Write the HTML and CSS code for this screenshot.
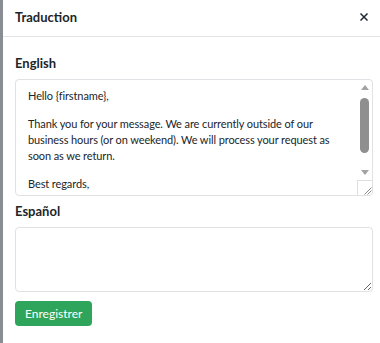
FILE: index.html
```html
<!DOCTYPE html>
<html>
<head>
<meta charset="utf-8">
<link rel="stylesheet" href="styles.css">
</head>
<body>
<div class="modal">
  <div class="modal-header">
    <h5 class="modal-title">Traduction</h5>
    <button class="close" type="button" aria-label="Fermer">
      <svg width="8" height="8" viewBox="0 0 8 8"><path d="M1 1L7 7M7 1L1 7" stroke="#1e2a36" stroke-width="1.5" stroke-linecap="square"/></svg>
    </button>
  </div>
  <div class="modal-body">
    <label class="field-label">English</label>
    <div class="field field-en">
      <div class="editor" contenteditable="true">
        <p>Hello {firstname},</p>
        <p>Thank you for your message. We are currently outside of our business hours (or on weekend). We will process your request as soon as we return.</p>
        <p>Best regards,</p>
      </div>
      <div class="scrollbar">
        <span class="sb-btn"><span class="tri tri-up"></span></span>
        <span class="sb-track"><span class="sb-thumb"></span></span>
        <span class="sb-btn"><span class="tri tri-down"></span></span>
        <span class="sb-corner">
          <svg width="14" height="14" viewBox="0 0 14 14"><path d="M13.5 6.5L6.5 13.5M13.5 9.5L9.5 13.5" stroke="#8a8a8a" stroke-width="1"/></svg>
        </span>
      </div>
    </div>
    <label class="field-label">Español</label>
    <textarea class="field field-es"></textarea>
    <button class="btn-save" type="button">Enregistrer</button>
  </div>
</div>
</body>
</html>
```
FILE: styles.css
```css
html, body {
  margin: 0;
  padding: 0;
  background: #ffffff;
}
body {
  font-family: Lato, "Noto Sans", sans-serif;
  color: #212529;
  width: 380px;
  height: 343px;
  overflow: hidden;
}
.modal {
  border-left: 3px solid #8a8c93;
  height: 343px;
  box-sizing: border-box;
}
.modal-header {
  display: flex;
  align-items: center;
  justify-content: space-between;
  height: 37px;
  box-sizing: border-box;
  padding: 0 12px 2px 12px;
  border-bottom: 1px solid #e3e4e6;
}
.modal-title {
  margin: 0;
  font-size: 13px;
  font-weight: 700;
  color: #212529;
}
.close {
  border: 0;
  background: none;
  padding: 0;
  margin: 0;
  width: 8px;
  height: 8px;
  display: flex;
}
.modal-body {
  display: flex;
  flex-direction: column;
  align-items: flex-start;
  padding: 18px 4px 0 12px;
}
.field-label {
  font-size: 13px;
  font-weight: 700;
  line-height: 16px;
  color: #212529;
  margin-bottom: 8px;
}
.field {
  display: block;
  width: 358px;
  box-sizing: border-box;
  border: 1px solid #dfe1e4;
  border-radius: 4px;
  font-family: inherit;
  font-size: 11px;
  letter-spacing: -0.1px;
  line-height: 16px;
  color: #212529;
  padding: 8px 12px;
  margin: 0 0 7px 0;
  resize: vertical;
  outline: none;
}
.field-en {
  display: flex;
  height: 117px;
  padding: 0;
  overflow: hidden;
  resize: none;
}
.editor {
  flex: 1;
  min-width: 0;
  padding: 8px 12px;
  outline: none;
  overflow: hidden;
}
.editor p {
  margin: 0 0 12px 0;
}
.editor p:last-child {
  margin-bottom: 0;
}
.scrollbar {
  width: 15px;
  flex: none;
  display: flex;
  flex-direction: column;
}
.sb-btn {
  height: 15px;
  flex: none;
  display: flex;
  align-items: center;
  justify-content: center;
}
.tri {
  width: 0;
  height: 0;
  border-left: 4px solid transparent;
  border-right: 4px solid transparent;
}
.tri-up {
  border-bottom: 5px solid #a3a3a3;
}
.tri-down {
  border-top: 5px solid #a3a3a3;
}
.sb-track {
  flex: 1;
  display: flex;
  justify-content: center;
  padding-top: 3px;
}
.sb-thumb {
  width: 9px;
  height: 55px;
  border-radius: 5px;
  background: #8f8f8f;
}
.sb-corner {
  height: 15px;
  flex: none;
  box-sizing: border-box;
  border-left: 1px solid #dedede;
  border-top: 1px solid #dedede;
  display: flex;
  align-items: flex-end;
  justify-content: flex-end;
}
.sb-corner svg {
  display: block;
}
.field-es {
  height: 65px;
  margin-bottom: 9px;
}
.btn-save {
  background: #2ea55a;
  color: #ffffff;
  border: 0;
  border-radius: 4px;
  font-family: inherit;
  font-size: 12px;
  height: 25px;
  padding: 0 10px;
}
```
